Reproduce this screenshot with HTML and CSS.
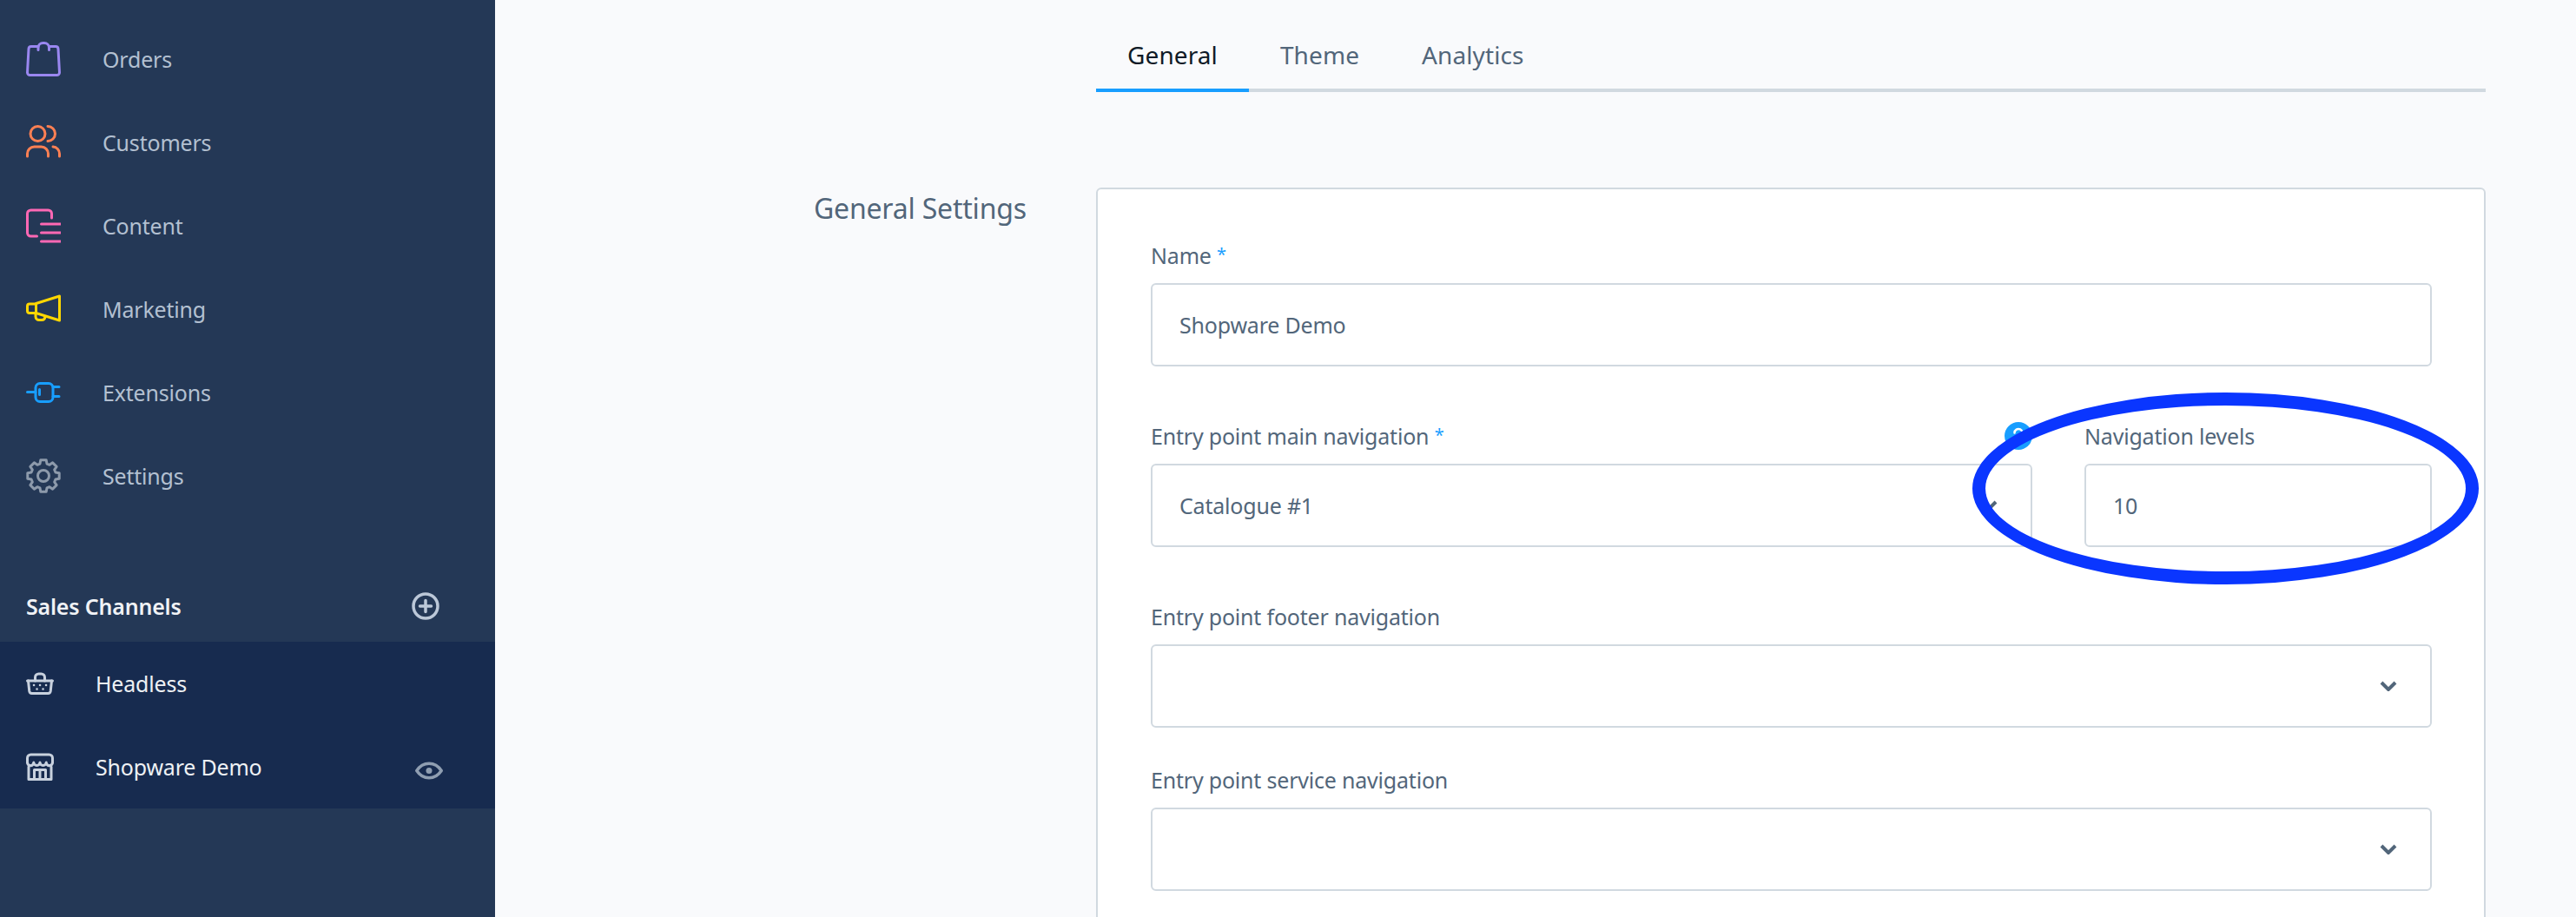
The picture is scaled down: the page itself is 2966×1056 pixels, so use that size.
FILE: index.html
```html
<!DOCTYPE html>
<html>
    <head>
        <meta charset="utf-8">
        <title>Shopware Demo</title>
        <link rel="stylesheet" href="styles.css">
    </head>
    <body>
        <div class="sidebar">
            <div class="nav">
                <div class="nav_item">
                    <svg class="nav_icon icon_orders" viewBox="0 0 40 40"><path d="M14 5.5H6a3 3 0 0 0-3 2.900L1.500 35.500a3 3 0 0 0 3 3h31a3 3 0 0 0 3-3L37 8.400a3 3 0 0 0-3-2.900H26.500"/><path d="M14 9.500V7a5.500 5.500 0 0 1 5.500-5.500h1.500A5.500 5.500 0 0 1 26.500 7v2.500"/></svg>
                    <span>Orders</span>
                </div>
                <div class="nav_item">
                    <svg class="nav_icon icon_customers" viewBox="0 0 40 40"><circle cx="13.5" cy="10" r="8.5"/><path d="M25 1.5a8.5 8.5 0 0 1 0 17"/><path d="M1.5 36v-3a8 8 0 0 1 8-8h8a8 8 0 0 1 8 8v3"/><path d="M31 25a8 8 0 0 1 7.5 8v3"/></svg>
                    <span>Customers</span>
                </div>
                <div class="nav_item">
                    <svg class="nav_icon icon_content" viewBox="0 0 40 40"><path d="M29.5 11V6a4 4 0 0 0-4-4H5.5a4 4 0 0 0-4 4v22a4 4 0 0 0 4 4h7"/><path d="M17.5 18H40M17.5 28H40M17.5 38H40"/></svg>
                    <span>Content</span>
                </div>
                <div class="nav_item">
                    <svg class="nav_icon icon_marketing" viewBox="0 0 40 40"><path d="M11.5 13.5L38.5 5v28l-27-8.500z"/><path d="M11.500 14H4a2.500 2.500 0 0 0-2.500 2.500v5.500A2.500 2.500 0 0 0 4 24.500h7.500"/><path d="M11 24.500v4a4 4 0 0 0 4 4h3a4 4 0 0 0 4-3.500"/></svg>
                    <span>Marketing</span>
                </div>
                <div class="nav_item">
                    <svg class="nav_icon icon_extensions" viewBox="0 0 40 40"><rect x="11" y="9.500" width="20" height="21" rx="5"/><path d="M1.500 19.500H11M31 13.500h7M31 24.500h7M15.500 16.500v6"/></svg>
                    <span>Extensions</span>
                </div>
                <div class="nav_item">
                    <svg class="nav_icon icon_settings" viewBox="0 0 40 40"><polygon points="16,6.060 16.790,1.780 23.210,1.780 24,6.060 27.030,7.320 30.610,4.850 35.150,9.390 32.680,12.970 33.940,16 38.220,16.790 38.220,23.210 33.940,24 32.680,27.030 35.150,30.610 30.610,35.150 27.030,32.680 24,33.940 23.210,38.220 16.790,38.220 16,33.940 12.970,32.680 9.390,35.150 4.850,30.610 7.320,27.030 6.060,24 1.780,23.210 1.780,16.790 6.060,16 7.320,12.970 4.850,9.390 9.390,4.850 12.970,7.320"/><circle cx="20" cy="20" r="6.500"/></svg>
                    <span>Settings</span>
                </div>
            </div>

            <div class="channels_head">
                <span>Sales Channels</span>
                <svg class="channels_add" viewBox="0 0 32 32"><circle cx="16" cy="16" r="14"/><path d="M16 9.500v13M9.500 16h13"/></svg>
            </div>

            <div class="channels">
                <div class="channel">
                    <svg class="channel_icon" viewBox="0 0 32 26"><path d="M1.500 10h29"/><path d="M2.500 10l1.300 12a3 3 0 0 0 3 2.500h18.400a3 3 0 0 0 3-2.500l1.300-12"/><path d="M10.500 10V6a4 4 0 0 1 4-4h3a4 4 0 0 1 4 4v4"/><path class="dots" d="M9 15h.1M16 15h.1M23 15h.1M12.500 19.500h.1M19.500 19.500h.1"/></svg>
                    <span>Headless</span>
                </div>
                <div class="channel">
                    <svg class="channel_icon" viewBox="0 0 32 32"><path d="M1.500 11V6a4 4 0 0 1 4-4h21a4 4 0 0 1 4 4v5"/><path d="M1.500 11a3.600 3.600 0 0 0 7.300 0 3.600 3.600 0 0 0 7.200 0 3.600 3.600 0 0 0 7.200 0 3.600 3.600 0 0 0 7.300 0"/><path d="M3 16v14.500h26V16"/><path d="M9.500 30V19.500h13V30M16 19.500V30"/></svg>
                    <span class="channel_name">Shopware Demo</span>
                    <svg class="channel_eye" viewBox="0 0 32 21"><path d="M1.800 10.500C9 -0.500 23 -0.500 30.200 10.500 23 21.500 9 21.500 1.800 10.500z"/><circle cx="16" cy="10.500" r="3.500"/></svg>
                </div>
            </div>
        </div>

        <div class="main">
            <div class="tabs">
                <div class="tab tab_active">General</div>
                <div class="tab">Theme</div>
                <div class="tab">Analytics</div>
            </div>

            <h2 class="section_title">General Settings</h2>

            <div class="card">
                <div class="field field_wide">
                    <div class="label">Name <span class="required">*</span></div>
                    <div class="input">Shopware Demo</div>
                </div>

                <div class="field_row">
                    <div class="field">
                        <div class="label label_help">
                            <span>Entry point main navigation <span class="required">*</span></span>
                            <svg class="help_icon" viewBox="0 0 32 32"><circle cx="16" cy="16" r="16"/><path d="M11.500 12.500a4.500 4.500 0 1 1 7 3.700c-1.600 1-2.500 1.900-2.500 3.600M16 24v.1"/></svg>
                        </div>
                        <div class="input">
                            <span>Catalogue #1</span>
                            <svg class="chevron" viewBox="0 0 20 12"><path d="M2 2l8 8 8-8"/></svg>
                        </div>
                    </div>
                    <div class="field">
                        <div class="label">Navigation levels</div>
                        <div class="input">10</div>
                    </div>
                </div>

                <div class="field">
                    <div class="label">Entry point footer navigation</div>
                    <div class="input">
                        <span></span>
                        <svg class="chevron" viewBox="0 0 20 12"><path d="M2 2l8 8 8-8"/></svg>
                    </div>
                </div>

                <div class="field">
                    <div class="label">Entry point service navigation</div>
                    <div class="input">
                        <span></span>
                        <svg class="chevron" viewBox="0 0 20 12"><path d="M2 2l8 8 8-8"/></svg>
                    </div>
                </div>
            </div>
        </div>

        <div class="highlight_ring"></div>
    </body>
</html>
```

FILE: styles.css
```css
* {
    box-sizing: border-box;
}

html, body {
    height: 100%;
}

body {
    margin: 0;
    display: flex;
    overflow: hidden;
    position: relative;
    background-color: #f9fafc;
    font-family: "Noto Sans", "Open Sans", sans-serif;
    font-size: 25px;
    letter-spacing: -0.2px;
    color: #52667a;
}

/* sidebar */
.sidebar {
    width: 570px;
    flex-shrink: 0;
    background-color: #243856;
}

.nav {
    padding-top: 20px;
}

.nav_item {
    display: flex;
    align-items: center;
    height: 96px;
    padding-left: 30px;
    color: #b3c0d1;
}

.nav_icon {
    width: 40px;
    height: 40px;
    margin-right: 48px;
    fill: none;
    stroke-width: 3;
    stroke-linecap: round;
    stroke-linejoin: round;
}

.icon_orders { stroke: #9a87f0; }
.icon_customers { stroke: #ff8053; }
.icon_content { stroke: #ff68b4; }
.icon_marketing { stroke: #ffd700; }
.icon_extensions { stroke: #189eff; }
.icon_settings { stroke: #8d9aab; }

.channels_head {
    display: flex;
    justify-content: space-between;
    align-items: center;
    height: 143px;
    padding: 60px 64px 0 30px;
    font-weight: 600;
    color: #f0f2f5;
}

.channels_add {
    width: 32px;
    height: 32px;
    fill: none;
    stroke: #bcc8d8;
    stroke-width: 3.500;
    stroke-linecap: round;
}

.channels {
    background-color: #172b4f;
}

.channel {
    display: flex;
    align-items: center;
    height: 96px;
    padding-left: 30px;
    color: #eef1f4;
}

.channel_icon {
    width: 32px;
    margin-right: 48px;
    fill: none;
    stroke: #c8d1de;
    stroke-width: 3;
    stroke-linecap: round;
    stroke-linejoin: round;
}

.channel_icon .dots {
    stroke-width: 2.500;
}

.channel_name {
    flex: 1;
}

.channel_eye {
    width: 32px;
    height: 21px;
    margin: 8px 60px 0 0;
    fill: none;
    stroke: #8f9eb1;
    stroke-width: 3.500;
    stroke-linejoin: round;
}

.channel_eye circle {
    fill: #8f9eb1;
    stroke: none;
}

/* main column */
.main {
    flex: 1;
    display: grid;
    grid-template-columns: 325px 1600px;
    grid-template-rows: 106px auto;
    align-content: start;
    padding-left: 367px;
}

.tabs {
    grid-column: 2;
    display: flex;
    align-items: flex-end;
    border-bottom: 4px solid #d1d9e0;
}

.tab {
    padding: 0 36px 14px;
    margin-bottom: -4px;
    border-bottom: 4px solid transparent;
    font-size: 28px;
    letter-spacing: 0.1px;
    line-height: 50px;
}

.tab_active {
    border-bottom-color: #189eff;
    color: #0f1a26;
}

.section_title {
    grid-column: 1;
    grid-row: 2;
    margin: 110px 0 0;
    font-size: 32px;
    font-weight: 400;
    line-height: 48px;
}

.card {
    grid-column: 2;
    grid-row: 2;
    margin-top: 110px;
    padding: 56px 60px 60px 61px;
    background-color: #fff;
    border: 2px solid #d1d9e0;
    border-radius: 6px;
}

.field {
    margin-bottom: 40px;
}

.field_wide {
    margin-bottom: 60px;
}

.field_row {
    display: grid;
    grid-template-columns: 1fr 400px;
    gap: 60px;
    margin-bottom: 60px;
}

.field_row .field {
    margin-bottom: 0;
}

.label {
    line-height: 40px;
    margin-bottom: 12px;
}

.label_help {
    display: flex;
    justify-content: space-between;
    align-items: center;
}

.required {
    position: relative;
    top: -4px;
    font-size: 20px;
    line-height: 1;
    color: #189eff;
}

.help_icon {
    width: 32px;
    height: 32px;
    fill: #189eff;
}

.help_icon path {
    fill: none;
    stroke: #fff;
    stroke-width: 2.500;
    stroke-linecap: round;
}

.input {
    display: flex;
    justify-content: space-between;
    align-items: center;
    height: 96px;
    padding: 0 38px 0 31px;
    background-color: #fff;
    border: 2px solid #d1d9e0;
    border-radius: 6px;
}

.chevron {
    width: 20px;
    height: 12px;
    fill: none;
    stroke: #52667a;
    stroke-width: 4;
}

/* blue marker ring drawn over the screenshot */
.highlight_ring {
    position: absolute;
    left: 2271px;
    top: 452px;
    width: 583px;
    height: 221px;
    border: 15px solid #0a36ff;
    border-radius: 50%;
}
```
